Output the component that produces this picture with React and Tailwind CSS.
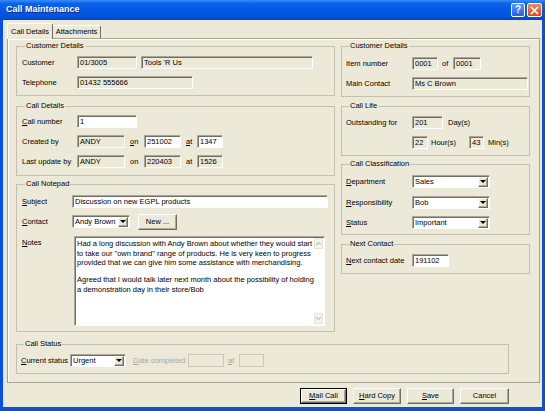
import clsx from 'clsx'

const SUNKEN = 'border border-t-[#aca899] border-l-[#aca899] border-b-white border-r-white shadow-[inset_1px_1px_0_#716f64]'
const RAISED = 'border border-t-white border-l-white border-b-[#716f64] border-r-[#716f64] shadow-[inset_-1px_-1px_0_#aca899]'

function U({ children }) {
    return <span className="underline underline-offset-[1px]">{children}</span>
}

function Field({ w, white, disabled, children }) {
    return (
        <div
            className={clsx(
                'h-[13px] flex items-center pl-[2px] whitespace-nowrap overflow-hidden shrink-0',
                disabled ? 'border border-[#cbc8b8]' : SUNKEN,
                white ? 'bg-white' : 'bg-[#ece9d8]',
                w
            )}
        >
            {children}
        </div>
    )
}

function Combo({ w, children }) {
    return (
        <div className={clsx('h-[13px] flex items-center bg-white shrink-0', SUNKEN, w)}>
            <span className="flex-1 pl-[2px] whitespace-nowrap overflow-hidden">{children}</span>
            <span className={clsx('w-[10px] h-[10px] mr-[1px] flex items-center justify-center bg-[#ece9d8]', RAISED)}>
                <span className="w-0 h-0 border-l-[3px] border-r-[3px] border-t-[3px] border-l-transparent border-r-transparent border-t-black" />
            </span>
        </div>
    )
}

function Group({ title, className, children }) {
    return (
        <fieldset className={clsx('border border-[#c3c0ae] min-w-0', className)}>
            <legend className="ml-[3px] px-[1px] leading-[10px]">{title}</legend>
            {children}
        </fieldset>
    )
}

function Btn({ children, isDefault, w = 'w-[47px]' }) {
    return (
        <div className={clsx('h-[16px]', w, isDefault ? 'border border-black' : '')}>
            <div className={clsx('h-full w-full flex items-center justify-center bg-[#ece9d8]', RAISED)}>
                {children}
            </div>
        </div>
    )
}

const Row = ({ className, children }) => (
    <div className={clsx('flex items-center h-[13px]', className)}>{children}</div>
)

export default function App() {
    return (
        <div className="w-[545px] h-[411px] flex flex-col bg-[#0a50d8] font-['Liberation_Sans',Arial,sans-serif] text-[7.5px] text-black overflow-hidden">
            {/* title bar */}
            <div className="h-[20px] shrink-0 flex items-center pl-[6px] pr-[3px] bg-[linear-gradient(to_bottom,#3b8cf8_0%,#0a62ea_18%,#0358e3_55%,#0452dc_85%,#0244c4_100%)]">
                <span className="flex-1 text-white font-bold text-[9px] [text-shadow:1px_1px_0_#0a2a80]">Call Maintenance</span>
                <div className="w-[14px] h-[14px] rounded-[2px] border border-white bg-[linear-gradient(to_bottom,#5c93f5,#2560e6)] flex items-center justify-center text-white font-bold text-[10px] leading-none">?</div>
                <div className="w-[15px] h-[14px] ml-[2px] rounded-[2px] border border-white bg-[linear-gradient(to_bottom,#ec8a62,#d8481c)] flex items-center justify-center">
                    <svg width="9" height="9" viewBox="0 0 9 9">
                        <path d="M1.5 1.5 L7.5 7.5 M7.5 1.5 L1.5 7.5" stroke="white" strokeWidth="1.6" strokeLinecap="square" />
                    </svg>
                </div>
            </div>

            {/* body */}
            <div className="flex-1 flex flex-col bg-[#ece9d8] mx-[3px] mb-[4px]">
                {/* tabs */}
                <div className="h-[18px] shrink-0 flex items-end pl-[4px]">
                    <div className="relative z-10 -mb-px h-[16px] w-[46px] flex items-center justify-center bg-[#ece9d8] border-t border-l border-r border-t-white border-l-white border-r-[#716f64] rounded-t-[2px]">
                        Call Details
                    </div>
                    <div className="h-[13px] w-[48px] flex items-center justify-center border-t border-r border-t-white border-r-[#716f64] rounded-tr-[2px]">
                        Attachments
                    </div>
                </div>

                {/* panel */}
                <div className="w-[533px] h-[345px] ml-[4px] shrink-0 border border-[#a5a291] shadow-[inset_1px_1px_0_#fff] pl-[8px] pt-[2px]">
                    <div className="flex gap-[6px] items-start">
                        {/* left column */}
                        <div className="w-[319px] flex flex-col">
                            <Group title="Customer Details" className="h-[55px] pt-[5px] pl-[5px]">
                                <Row>
                                    <span className="w-[55px]">Customer</span>
                                    <Field w="w-[60px]">01/3005</Field>
                                    <Field w="w-[172px] ml-[4px]">Tools 'R Us</Field>
                                </Row>
                                <Row className="mt-[7px]">
                                    <span className="w-[55px]">Telephone</span>
                                    <Field w="w-[116px]">01432 555666</Field>
                                </Row>
                            </Group>

                            <Group title="Call Details" className="h-[75px] mt-[5px] pt-[4px] pl-[5px]">
                                <Row>
                                    <span className="w-[55px]"><U>C</U>all number</span>
                                    <Field w="w-[60px]" white>1</Field>
                                </Row>
                                <Row className="mt-[7px]">
                                    <span className="w-[55px]">Created by</span>
                                    <Field w="w-[48px]">ANDY</Field>
                                    <span className="w-[19px] pl-[5px]"><U>o</U>n</span>
                                    <Field w="w-[37px]" white>251002</Field>
                                    <span className="w-[16px] pl-[5px]"><U>a</U>t</span>
                                    <Field w="w-[26px]" white>1347</Field>
                                </Row>
                                <Row className="mt-[7px]">
                                    <span className="w-[55px]">Last update by</span>
                                    <Field w="w-[48px]">ANDY</Field>
                                    <span className="w-[19px] pl-[5px]">on</span>
                                    <Field w="w-[37px]">220403</Field>
                                    <span className="w-[16px] pl-[5px]">at</span>
                                    <Field w="w-[26px]">1526</Field>
                                </Row>
                            </Group>

                            <Group title="Call Notepad" className="h-[153px] mt-[3px] pt-[6px] pl-[5px]">
                                <Row>
                                    <span className="w-[50px]"><U>S</U>ubject</span>
                                    <Field w="w-[256px]" white>Discussion on new EGPL products</Field>
                                </Row>
                                <div className="flex items-center h-[15px] mt-[6px]">
                                    <span className="w-[50px]"><U>C</U>ontact</span>
                                    <Combo w="w-[58px]">Andy Brown</Combo>
                                    <div className="ml-[8px]">
                                        <Btn w="w-[39px]">New ...</Btn>
                                    </div>
                                </div>
                                <div className="flex mt-[7px]">
                                    <span className="w-[52px] pt-[1px]"><U>N</U>otes</span>
                                    <div className={clsx('w-[251px] h-[90px] flex bg-white', SUNKEN)}>
                                        <div className="flex-1 pl-[2px] pt-[2px] leading-[9.5px] whitespace-nowrap">
                                            <div>Had a long discussion with Andy Brown about whether they would start</div>
                                            <div>to take our "own brand" range of products. He is very keen to progress</div>
                                            <div>provided that we can give him some assistance with merchandising.</div>
                                            <div className="mt-[7.5px]">Agreed that I would talk later next month about the possibility of holding</div>
                                            <div>a demonstration day in their store/Bob</div>
                                        </div>
                                        <div className="w-[11px] flex flex-col justify-between py-[1px] mr-[1px]">
                                            <div className="h-[11px] flex items-center justify-center border border-[#e3e1d6] bg-[#f5f4ee] rounded-[1px]">
                                                <svg width="7" height="5" viewBox="0 0 7 5"><path d="M1 4 L3.5 1.5 L6 4" fill="none" stroke="#c4c2b8" strokeWidth="1.2" /></svg>
                                            </div>
                                            <div className="h-[11px] flex items-center justify-center border border-[#e3e1d6] bg-[#f5f4ee] rounded-[1px]">
                                                <svg width="7" height="5" viewBox="0 0 7 5"><path d="M1 1 L3.5 3.5 L6 1" fill="none" stroke="#c4c2b8" strokeWidth="1.2" /></svg>
                                            </div>
                                        </div>
                                    </div>
                                </div>
                            </Group>
                        </div>

                        {/* right column */}
                        <div className="w-[189px] flex flex-col">
                            <Group title="Customer Details" className="h-[56px] pt-[6px] pl-[4px]">
                                <Row>
                                    <span className="w-[66px]">Item number</span>
                                    <Field w="w-[26px]">0001</Field>
                                    <span className="w-[15px] pl-[4px]">of</span>
                                    <Field w="w-[28px]">0001</Field>
                                </Row>
                                <Row className="mt-[7px]">
                                    <span className="w-[66px]">Main Contact</span>
                                    <Field w="w-[116px]">Ms C Brown</Field>
                                </Row>
                            </Group>

                            <Group title="Call Life" className="h-[55px] mt-[4px] pt-[5px] pl-[4px]">
                                <Row>
                                    <span className="w-[66px]">Outstanding for</span>
                                    <Field w="w-[31px]">201</Field>
                                    <span className="pl-[5px]">Day(s)</span>
                                </Row>
                                <Row className="mt-[7px]">
                                    <span className="w-[66px]" />
                                    <Field w="w-[16px]">22</Field>
                                    <span className="w-[41px] pl-[3px]">Hour(s)</span>
                                    <Field w="w-[15px]">43</Field>
                                    <span className="pl-[4px]">Min(s)</span>
                                </Row>
                            </Group>

                            <Group title="Call Classification" className="h-[76px] mt-[3px] pt-[6px] pl-[4px]">
                                <Row>
                                    <span className="w-[66px]"><U>D</U>epartment</span>
                                    <Combo w="w-[78px]">Sales</Combo>
                                </Row>
                                <Row className="mt-[8px]">
                                    <span className="w-[66px]"><U>R</U>esponsibility</span>
                                    <Combo w="w-[78px]">Bob</Combo>
                                </Row>
                                <Row className="mt-[7px]">
                                    <span className="w-[66px]"><U>S</U>tatus</span>
                                    <Combo w="w-[78px]">Important</Combo>
                                </Row>
                            </Group>

                            <Group title="Next Contact" className="h-[35px] mt-[4px] pt-[5px] pl-[4px]">
                                <Row>
                                    <span className="w-[66px]"><U>N</U>ext contact date</span>
                                    <Field w="w-[37px]" white>191102</Field>
                                </Row>
                            </Group>
                        </div>
                    </div>

                    <Group title="Call Status" className="w-[493px] h-[35px] mt-[7px] pt-[5px] pl-[4px]">
                        <Row>
                            <span className="w-[49px]"><U>C</U>urrent status</span>
                            <Combo w="w-[56px]">Urgent</Combo>
                            <span className="w-[62px] pl-[7px] text-[#aca899]"><U>D</U>ate completed</span>
                            <Field w="w-[36px]" disabled />
                            <span className="w-[15px] pl-[4px] text-[#aca899]"><U>a</U>t</span>
                            <Field w="w-[25px]" disabled />
                        </Row>
                    </Group>
                </div>

                {/* buttons */}
                <div className="flex justify-end gap-[6px] pr-[33px] mt-[5px]">
                    <Btn isDefault><U>M</U>ail Call</Btn>
                    <Btn w="w-[48px]"><U>H</U>ard Copy</Btn>
                    <Btn><U>S</U>ave</Btn>
                    <Btn w="w-[49px]">Cancel</Btn>
                </div>
            </div>
        </div>
    )
}
